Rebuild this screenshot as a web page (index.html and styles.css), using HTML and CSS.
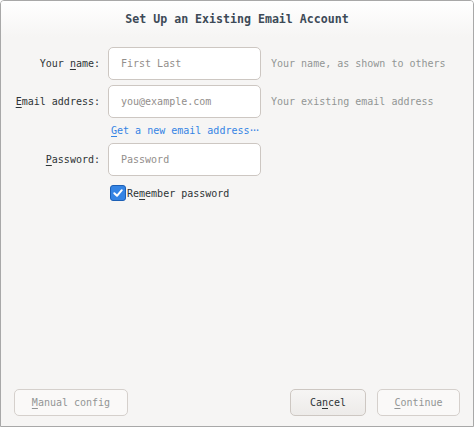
FILE: index.html
```html
<!DOCTYPE html>
<html>
<head>
<meta charset="utf-8">
<link rel="stylesheet" href="styles.css">
</head>
<body>
<div class="window">
  <div class="titlebar">Set Up an Existing Email Account</div>
  <div class="content">
    <div class="form">
      <label class="label">Your <u>n</u>ame:</label>
      <div class="input"><span class="ph">First Last</span></div>
      <div class="hint">Your name, as shown to others</div>

      <label class="label"><u>E</u>mail address:</label>
      <div class="input"><span class="ph">you@example.com</span></div>
      <div class="hint">Your existing email address</div>

      <div></div>
      <a class="link"><u>G</u>et a new email address<span class="dots">···</span></a>
      <div></div>

      <label class="label"><u>P</u>assword:</label>
      <div class="input"><span class="ph">Password</span></div>
      <div></div>

      <div></div>
      <div class="check">
        <span class="box"><svg width="12" height="12" viewBox="0 0 12 12"><path d="M2.3 6.2 L5 8.8 L9.8 3.2" fill="none" stroke="#fff" stroke-width="2" stroke-linecap="round" stroke-linejoin="round"/></svg></span>
        <span>Re<u>m</u>ember password</span>
      </div>
      <div></div>
    </div>
    <div class="spacer"></div>
    <div class="buttons">
      <button class="btn disabled manual"><u>M</u>anual config</button>
      <div class="grow"></div>
      <button class="btn cancel">Ca<u>n</u>cel</button>
      <button class="btn disabled cont"><u>C</u>ontinue</button>
    </div>
  </div>
</div>
</body>
</html>
```
FILE: styles.css
```css
html, body {
  margin: 0;
  padding: 0;
  width: 474px;
  height: 427px;
  overflow: hidden;
  background: #ffffff;
}
body {
  font-family: "DejaVu Sans Mono", monospace;
  font-size: 10px;
  color: #2e3436;
}
.window {
  box-sizing: border-box;
  width: 474px;
  height: 427px;
  border: 1px solid #a8a8a8;
  border-radius: 4px 4px 0 0;
  background: #f6f5f4;
  display: flex;
  flex-direction: column;
  overflow: hidden;
}
.titlebar {
  height: 36px;
  flex: none;
  display: flex;
  align-items: center;
  justify-content: center;
  font-weight: bold;
  font-size: 11.6px;
  color: #3d4a57;
  background: linear-gradient(#ffffff, #f6f5f4);
}
.content {
  flex: 1;
  display: flex;
  flex-direction: column;
  padding: 10px 13px 10px 13px;
}
.form {
  display: grid;
  grid-template-columns: 86px 153px auto;
  column-gap: 8px;
  row-gap: 5px;
  align-items: center;
}
.label {
  text-align: right;
  white-space: nowrap;
}
.label u, .check u, .btn u, .link u {
  text-decoration-thickness: 1px;
  text-underline-offset: 2px;
}
.input {
  box-sizing: border-box;
  height: 33px;
  background: #ffffff;
  border: 1px solid #cdc7c2;
  border-radius: 5px;
  display: flex;
  align-items: center;
  padding-left: 12px;
}
.ph {
  color: #928e8b;
}
.hint {
  color: #929595;
  padding-left: 2px;
  white-space: nowrap;
}
.link {
  color: #3584e4;
  white-space: nowrap;
  margin-top: 2px;
  margin-bottom: 2px;
  padding-left: 3px;
}
.dots {
  letter-spacing: -3px;
  margin-left: -1px;
}
.check {
  display: flex;
  align-items: center;
  margin-top: 4px;
  padding-left: 2px;
}
.box {
  box-sizing: border-box;
  width: 16px;
  height: 16px;
  border-radius: 3px;
  background: #3584e4;
  border: 1px solid #1c5fb5;
  display: flex;
  align-items: center;
  justify-content: center;
  margin-right: 1px;
}
.box svg { display: block; }
.spacer { flex: 1; }
.buttons {
  display: flex;
  align-items: center;
}
.grow { flex: 1; }
.btn {
  font-family: "DejaVu Sans Mono", monospace;
  font-size: 10px;
  height: 27px;
  box-sizing: border-box;
  border-radius: 5px;
  border: 1px solid #cdc7c2;
  background: #f6f5f4;
  color: #2e3436;
  padding: 0;
}
.btn.disabled {
  background: #faf9f8;
  color: #929595;
  border-color: #d5d0cc;
}
.btn.cancel {
  background: linear-gradient(#f6f5f4, #edebe9);
  border-color: #cdc7c2;
  width: 76px;
  margin-right: 11px;
}
.manual { width: 114px; }
.cont { width: 83px; }
```
